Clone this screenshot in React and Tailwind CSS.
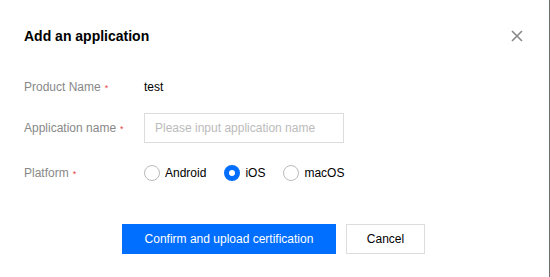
export default function App() {
  const platforms = ["Android", "iOS", "macOS"];
  const selected = "iOS";

  const Label = ({ children }) => (
    <div className="w-[120px] shrink-0 text-[12px] text-[#888]">
      {children}
      <span className="ml-[4px] text-[9px] text-[#e54545]">*</span>
    </div>
  );

  return (
    <div
      className="w-[550px] h-[277px] bg-white border-r border-[#6e6e6e] overflow-hidden"
      style={{ fontFamily: '"Liberation Sans", Arial, sans-serif' }}
    >
      {/* Header */}
      <div className="flex items-center justify-between pl-[24px] pr-[26px] pt-[26px] h-[46px]">
        <h1 className="text-[14px] font-bold text-black leading-[20px]">
          Add an application
        </h1>
        <button className="w-[12px] h-[12px] text-[#888]">
          <svg viewBox="0 0 12 12" width="12" height="12">
            <path d="M1 1L11 11M11 1L1 11" stroke="currentColor" strokeWidth="1.6" />
          </svg>
        </button>
      </div>

      {/* Form */}
      <div className="pl-[24px] mt-[31px]">
        <div className="flex items-center h-[20px] leading-[20px]">
          <Label>Product Name</Label>
          <span className="text-[12px] text-[#000]">test</span>
        </div>

        <div className="flex items-center mt-[16px] h-[30px]">
          <Label>Application name</Label>
          <input
            className="w-[200px] h-[30px] border border-[#ddd] px-[10px] text-[12px] outline-none placeholder:text-[#bbb]"
            placeholder="Please input application name"
          />
        </div>

        <div className="flex items-center mt-[20px] h-[20px]">
          <Label>Platform</Label>
          <div className="flex items-center gap-[18px]">
            {platforms.map((p) => (
              <label key={p} className="flex items-center gap-[5px] text-[12px] text-black">
                <span
                  className={
                    p === selected
                      ? "w-[16px] h-[16px] rounded-full border-[5px] border-[#006eff] bg-white"
                      : "w-[16px] h-[16px] rounded-full border border-[#bbb] bg-white"
                  }
                />
                {p}
              </label>
            ))}
          </div>
        </div>
      </div>

      {/* Footer */}
      <div className="flex justify-center gap-[10px] mt-[41px] pr-[2px]">
        <button className="w-[214px] h-[30px] bg-[#006eff] text-white text-[12px]">
          Confirm and upload certification
        </button>
        <button className="w-[79px] h-[30px] border border-[#ddd] bg-white text-black text-[12px]">
          Cancel
        </button>
      </div>
    </div>
  );
}
